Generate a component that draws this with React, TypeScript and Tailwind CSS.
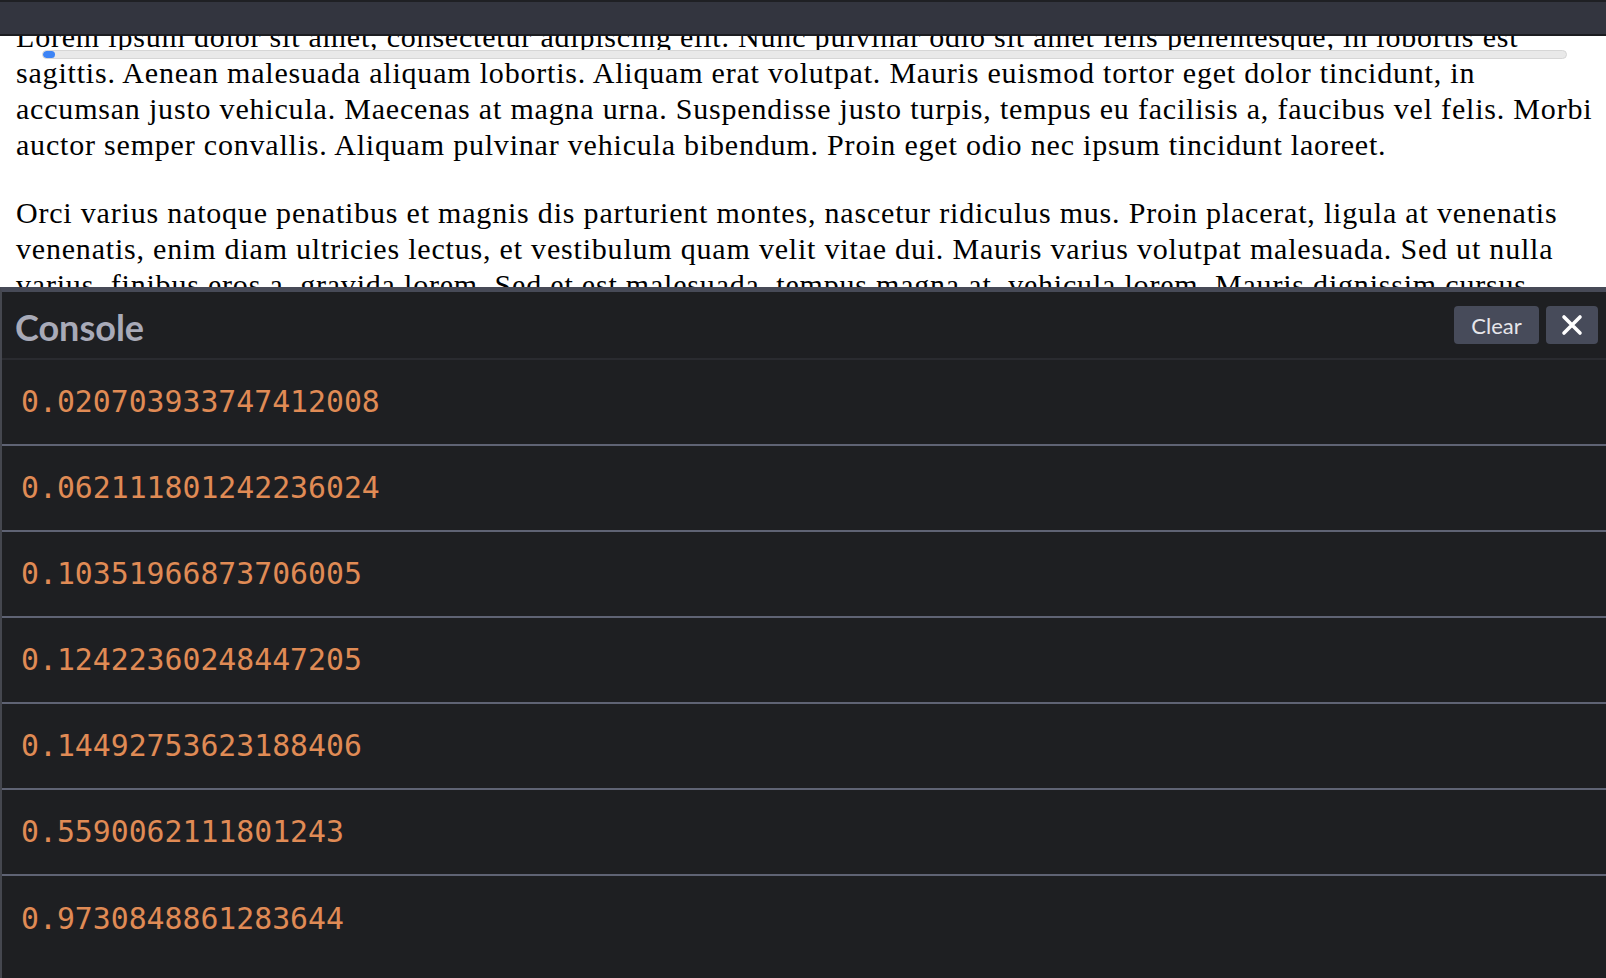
import React from "react";

const paragraphs = [
  "Lorem ipsum dolor sit amet, consectetur adipiscing elit. Nunc pulvinar odio sit amet felis pellentesque, in lobortis est sagittis. Aenean malesuada aliquam lobortis. Aliquam erat volutpat. Mauris euismod tortor eget dolor tincidunt, in accumsan justo vehicula. Maecenas at magna urna. Suspendisse justo turpis, tempus eu facilisis a, faucibus vel felis. Morbi auctor semper convallis. Aliquam pulvinar vehicula bibendum. Proin eget odio nec ipsum tincidunt laoreet.",
  "Orci varius natoque penatibus et magnis dis parturient montes, nascetur ridiculus mus. Proin placerat, ligula at venenatis venenatis, enim diam ultricies lectus, et vestibulum quam velit vitae dui. Mauris varius volutpat malesuada. Sed ut nulla varius, finibus eros a, gravida lorem. Sed et est malesuada, tempus magna at, vehicula lorem. Mauris dignissim cursus lorem, vitae porta nisl vulputate nec.",
];

const logs = [
  "0.020703933747412008",
  "0.062111801242236024",
  "0.10351966873706005",
  "0.12422360248447205",
  "0.14492753623188406",
  "0.5590062111801243",
  "0.9730848861283644",
];

export default function App() {
  return (
    <div className="flex h-[978px] w-full flex-col overflow-hidden bg-white">
      {/* fixed toolbar at the top of the page */}
      <div className="h-[36px] shrink-0 border-t-2 border-b-2 border-t-[#1f2024] border-b-[#1b1c20] bg-[#33353f]" />

      {/* scrolled page content, clipped by toolbar and console */}
      <div className="relative h-[251px] shrink-0 overflow-hidden">
        <div className="mt-[-17px] pr-2 pl-4 font-['Liberation_Serif','Times_New_Roman',serif] text-[30px] leading-[36px] tracking-[0.8px] text-black">
          {paragraphs.map((p, i) => (
            <p key={i} className="mb-8">
              {p}
            </p>
          ))}
        </div>

        {/* progress bar floating over the text */}
        <div className="absolute top-[14px] left-[42px] right-[39px] h-[9px] overflow-hidden rounded-full border border-[#d6d6d6] bg-[#e9e9e9]">
          <div className="h-full w-[12px] rounded-full bg-[#3d84f5]" />
        </div>
      </div>

      {/* console panel */}
      <div className="flex min-h-0 flex-1 flex-col border-t-[5px] border-l-2 border-t-[#474a57] border-l-[#45474f] bg-[#1e1f22]">
        <div className="flex h-[68px] shrink-0 items-center justify-between border-b-2 border-[#2a2b30] pr-2 pl-[13px]">
          <span className="pt-1 font-['Lato',sans-serif] text-[36px] font-bold text-[#a8aab8]">
            Console
          </span>
          <div className="flex items-center gap-[7px]">
            <button className="flex h-[38px] w-[85px] items-center justify-center rounded-[4px] bg-[#474b5a] font-['Lato',sans-serif] text-[22px] text-[#e6e6ea]">
              Clear
            </button>
            <button className="flex h-[38px] w-[52px] items-center justify-center rounded-[4px] bg-[#474b5a] text-white">
              <svg width="22" height="22" viewBox="0 0 22 22" fill="none">
                <path
                  d="M3 3L19 19M19 3L3 19"
                  stroke="currentColor"
                  strokeWidth="3.6"
                  strokeLinecap="round"
                />
              </svg>
            </button>
          </div>
        </div>

        <div className="min-h-0 flex-1 overflow-hidden">
          {logs.map((v, i) => (
            <div
              key={v}
              className={
                i < logs.length - 1
                  ? "flex h-[86px] items-center border-b-2 border-[#5f6374] pl-[19px] font-['DejaVu_Sans_Mono',monospace] text-[29.8px] text-[#e08b55]"
                  : "flex h-[86px] items-center pl-[19px] font-['DejaVu_Sans_Mono',monospace] text-[29.8px] text-[#e08b55]"
              }
            >
              {v}
            </div>
          ))}
        </div>
      </div>
    </div>
  );
}
